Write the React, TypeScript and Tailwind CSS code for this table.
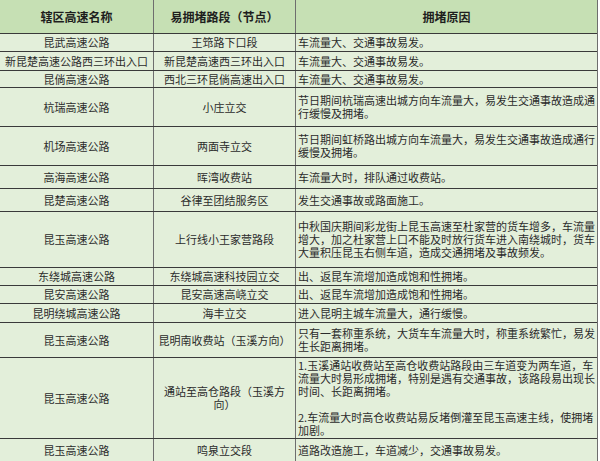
import React from 'react';

interface Row {
  name: string;
  node: string[];
  reason: string[];
  h: string;
}

const rows: Row[] = [
  { name: '昆武高速公路', node: ['王筇路下口段'], reason: ['车流量大、交通事故易发。'], h: 'h-[18px]' },
  { name: '新昆楚高速公路西三环出入口', node: ['新昆楚高速西三环出入口'], reason: ['车流量大、交通事故易发。'], h: 'h-[19px]' },
  { name: '昆倘高速公路', node: ['西北三环昆倘高速出入口'], reason: ['车流量大、交通事故易发。'], h: 'h-[17px]' },
  {
    name: '杭瑞高速公路',
    node: ['小庄立交'],
    reason: ['节日期间杭瑞高速出城方向车流量大，易发生交通事故造成通', '行缓慢及拥堵。'],
    h: 'h-[39px]',
  },
  {
    name: '机场高速公路',
    node: ['两面寺立交'],
    reason: ['节日期间虹桥路出城方向车流量大，易发生交通事故造成通行', '缓慢及拥堵。'],
    h: 'h-[39px]',
  },
  { name: '高海高速公路', node: ['晖湾收费站'], reason: ['车流量大时，排队通过收费站。'], h: 'h-[23px]' },
  { name: '昆楚高速公路', node: ['谷律至团结服务区'], reason: ['发生交通事故或路面施工。'], h: 'h-[23px]' },
  {
    name: '昆玉高速公路',
    node: ['上行线小王家营路段'],
    reason: [
      '中秋国庆期间彩龙街上昆玉高速至杜家营的货车增多，车流量',
      '增大，加之杜家营上口不能及时放行货车进入南绕城时，货车',
      '大量积压昆玉右侧车道，造成交通拥堵及事故频发。',
    ],
    h: 'h-[56px]',
  },
  { name: '东绕城高速公路', node: ['东绕城高速科技园立交'], reason: ['出、返昆车流增加造成饱和性拥堵。'], h: 'h-[18px]' },
  { name: '昆安高速公路', node: ['昆安高速高峣立交'], reason: ['出、返昆车流增加造成饱和性拥堵。'], h: 'h-[18px]' },
  { name: '昆明绕城高速公路', node: ['海丰立交'], reason: ['进入昆明主城车流量大，通行缓慢。'], h: 'h-[19px]' },
  {
    name: '昆玉高速公路',
    node: ['昆明南收费站（玉溪方向）'],
    reason: ['只有一套称重系统，大货车车流量大时，称重系统繁忙，易发', '生长距离拥堵。'],
    h: 'h-[35px]',
  },
  {
    name: '昆玉高速公路',
    node: ['通站至高仓路段（玉溪方', '向）'],
    reason: [
      '1.玉溪通站收费站至高仓收费站路段由三车道变为两车道，车',
      '流量大时易形成拥堵，特别是遇有交通事故，该路段易出现长',
      '时间、长距离拥堵。',
      '',
      '2.车流量大时高仓收费站易反堵倒灌至昆玉高速主线，使拥堵',
      '加剧。',
    ],
    h: 'h-[81px]',
  },
  { name: '昆玉高速公路', node: ['鸣泉立交段'], reason: ['道路改造施工，车道减少，交通事故易发。'], h: 'h-[23px]' },
];

function Lines({ lines }: { lines: string[] }) {
  return (
    <div>
      {lines.map((l, i) =>
        l === '' ? <div key={i} className="h-[13px]" /> : <div key={i}>{l}</div>
      )}
    </div>
  );
}

export default function App() {
  return (
    <div
      className="w-[600px] h-[461px] overflow-hidden bg-white text-[11px] leading-[13px] text-[#2b2b2b]"
      style={{ fontFamily: '"Noto Sans CJK SC", "Noto Sans", sans-serif' }}
    >
      <div className="w-[598px] border-r border-r-[#6e6e6e]">
        {/* header */}
        <div className="flex h-[34px] bg-[#c6e0b4] border-b border-b-[#3a3a3a] text-[12px] font-bold text-[#1e1e1e]">
          <div className="w-[154px] shrink-0 flex items-center justify-center border-r border-r-[#6e6e6e]">
            辖区高速名称
          </div>
          <div className="w-[142px] shrink-0 flex items-center justify-center border-r border-r-[#6e6e6e]">
            易拥堵路段（节点）
          </div>
          <div className="flex-1 flex items-center justify-center">拥堵原因</div>
        </div>

        {rows.map((r, i) => (
          <div key={i} className={`flex ${r.h} bg-[#e3efda] border-b border-b-[#3a3a3a]`}>
            <div className="w-[154px] shrink-0 flex items-center justify-center text-center border-r border-r-[#6e6e6e]">
              {r.name}
            </div>
            <div className="w-[142px] shrink-0 flex items-center justify-center text-center border-r border-r-[#6e6e6e]">
              <Lines lines={r.node} />
            </div>
            <div className="flex-1 flex items-center pl-[2px]">
              <Lines lines={r.reason} />
            </div>
          </div>
        ))}
      </div>
    </div>
  );
}
